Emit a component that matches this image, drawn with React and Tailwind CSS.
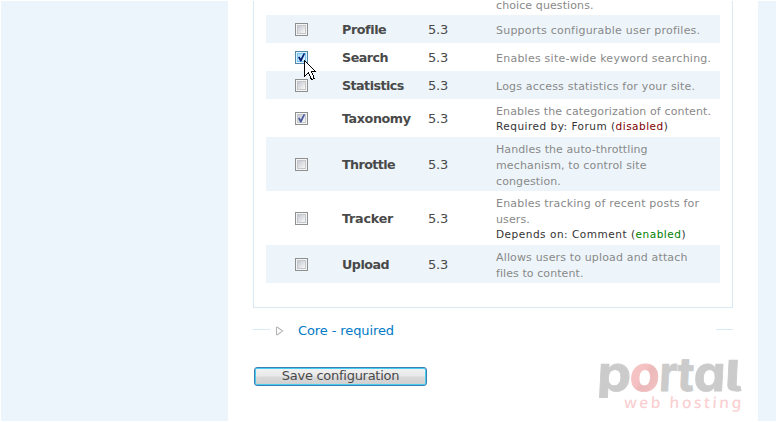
import React from "react";

const modules = [
  { name: "Profile", nt: "tracking-[-0.4px]", h: "h-[28px]", lines: [["Supports configurable user profiles.", "tracking-[0.22px]"]] },
  { name: "Search", nt: "tracking-[-0.5px]", h: "h-[28px]", state: "hover", lines: [["Enables site-wide keyword searching.", "tracking-[0.24px]"]] },
  { name: "Statistics", nt: "tracking-[-0.55px]", h: "h-[28px]", lines: [["Logs access statistics for your site.", "tracking-[0.19px]"]] },
  {
    name: "Taxonomy", nt: "tracking-[-0.4px]", h: "h-[38px]", state: "checked",
    lines: [["Enables the categorization of content.", "tracking-[0.13px]"]],
    note: ["Required by: Forum (", "disabled", "text-[#800000]", "tracking-[0.49px]"],
  },
  {
    name: "Throttle", nt: "tracking-[-0.6px]", h: "h-[54px]",
    lines: [
      ["Handles the auto-throttling", "tracking-[0.08px]"],
      ["mechanism, to control site", "tracking-[0.15px]"],
      ["congestion.", "tracking-[0.1px]"],
    ],
  },
  {
    name: "Tracker", nt: "tracking-[-0.2px]", h: "h-[54px]",
    lines: [["Enables tracking of recent posts for", "tracking-[0.2px]"], ["users.", "tracking-[0.1px]"]],
    note: ["Depends on: Comment (", "enabled", "text-[#008000]", "tracking-[0.52px]"],
  },
  {
    name: "Upload", nt: "tracking-[-0.5px]", h: "h-[38px]",
    lines: [["Allows users to upload and attach", "tracking-[0.15px]"], ["files to content.", "tracking-[0.08px]"]],
  },
];

function Checkbox({ state }) {
  const hover = state === "hover";
  return (
    <svg width="13" height="13" viewBox="0 0 13 13" className="block">
      <defs>
        <linearGradient id={hover ? "cbh" : "cbn"} x1="0" y1="0" x2="1" y2="1">
          <stop offset="0.1" stopColor={hover ? "#a9dcf8" : "#c6cad2"} />
          <stop offset="0.9" stopColor={hover ? "#e8f7ff" : "#f6f6f6"} />
        </linearGradient>
      </defs>
      <rect x="0.5" y="0.5" width="12" height="12" fill={hover ? "#def3fd" : "#f4f4f4"} stroke={hover ? "#5586a3" : "#8e8f8f"} />
      <rect x="2.5" y="2.5" width="8" height="8" fill={hover ? "url(#cbh)" : "url(#cbn)"} stroke={hover ? "#79c6f9" : "#c4c7cc"} />
      {state && (
        <path d="M3 6.2 L4.4 5.4 L5.8 7.6 L8.6 2.3 L10.2 2.6 L6.4 10.4 L5.2 10.4 Z" fill={hover ? "#061f72" : "#4a5a9c"} />
      )}
    </svg>
  );
}

function Cursor() {
  return (
    <svg width="13" height="21" viewBox="0 0 13 21" className="absolute left-[304px] top-[60px]" shapeRendering="crispEdges">
      <path d="M0.5 0.5 V16.5 L4.5 12.5 L7 18.5 L8 19.5 L10 18.5 L9.5 16.5 L7.5 11.5 H11.5 Z" fill="#fff" stroke="#000" />
    </svg>
  );
}

function Row({ m, odd }) {
  return (
    <div className={`flex items-center ${m.h} ${odd ? "bg-[#edf5fa]" : "bg-white"}`}>
      <div className="w-[76px] shrink-0 pl-[29px] pt-px">
        <Checkbox state={m.state} />
      </div>
      <div className={`w-[86px] shrink-0 pt-px text-[12.7px] font-bold leading-[20px] ${m.nt}`}>{m.name}</div>
      <div className="w-[68px] shrink-0 pt-px text-[13px] tracking-[-0.2px]">5.3</div>
      <div className={`whitespace-nowrap text-[11px] leading-[16px] text-[#898989] ${m.note ? "pt-[2px]" : "pt-[3px]"}`}>
        {m.lines.map(([t, tracking]) => (
          <div key={t} className={tracking}>{t}</div>
        ))}
        {m.note && (
          <div className={`h-[15px] text-[10.5px] leading-[12px] text-[#333] ${m.note[3]}`}>
            {m.note[0]}
            <span className={m.note[2]}>{m.note[1]}</span>)
          </div>
        )}
      </div>
    </div>
  );
}

const letters = [
  { c: "p", x: -0.5, sx: 1.1, sy: 1 },
  { c: "o", x: 32, sx: 1.0, sy: 1 },
  { c: "r", x: 61.5, sx: 0.9, sy: 1 },
  { c: "t", x: 79.5, sx: 0.95, sy: 0.95 },
  { c: "a", x: 96, sx: 1.03, sy: 1 },
  { c: "l", x: 127, sx: 1.15, sy: 0.87 },
];

function Logo() {
  return (
    <svg width="150" height="58" viewBox="0 0 150 58" className="absolute left-[597px] top-[357px] overflow-visible">
      <defs>
        <clipPath id="mark">
          <rect x="-5" y="-10" width="160" height="51" />
        </clipPath>
        <linearGradient id="ring" x1="0" y1="0" x2="1" y2="1">
          <stop offset="0" stopColor="#f8caca" />
          <stop offset="0.45" stopColor="#f5c0c1" />
          <stop offset="0.55" stopColor="#ecb9ba" />
          <stop offset="1" stopColor="#f6c4c6" />
        </linearGradient>
      </defs>
      <g clipPath="url(#mark)" className="font-['Inter',sans-serif] text-[49px] font-bold [font-feature-settings:'cv05','cv11','ss02']" strokeLinejoin="round">
        {letters.map((l) => {
          const paint = l.c === "o" ? "url(#ring)" : "#cbcbcb";
          return (
            <text key={l.c} transform={`translate(${l.x} 34) skewX(-3) scale(${l.sx} ${l.sy})`} fill={paint} stroke={paint} strokeWidth="0.8">
              {l.c}
            </text>
          );
        })}
      </g>
      <text transform="translate(27 51) skewX(-3)" className="font-['Noto_Sans',sans-serif] text-[15.5px] font-medium" textLength="117" fill="#f9cfd1">
        web hosting
      </text>
    </svg>
  );
}

export default function App() {
  return (
    <div className="relative h-[422px] w-[776px] overflow-hidden bg-white py-px pl-px font-['DejaVu_Sans',sans-serif] text-[#494949]">
      <div className="flex h-[420px] bg-[#edf5fc]">
        <div className="w-[227px] shrink-0" />
        <main className="h-[420px] w-[530px] shrink-0 bg-white pl-[25px]">
          <section className="h-[307px] w-[480px] border-x border-b border-[#d9eaf5] pl-[12px]">
            <div className="w-[454px]">
              <div className="h-[14px] pl-[230px] text-[11px] leading-[11px] tracking-[0.1px] text-[#898989]">
                <div className="relative -top-px">choice questions.</div>
              </div>
              {modules.map((m, i) => (
                <Row key={m.name} m={m} odd={i % 2 === 0} />
              ))}
            </div>
          </section>
          <div className="mt-[13px] flex h-[20px] w-[480px] items-center">
            <span className="-mt-[3px] h-px w-[17px] bg-[#d9eaf5]" />
            <svg width="9" height="10" viewBox="0 0 9 10" className="-mt-px ml-[5px]">
              <path d="M1.5 1.2 V8.8 H2.6 L7.6 5 L2.6 1.2 Z" fill="#fff" stroke="#b5b5b5" strokeWidth="1.1" />
            </svg>
            <a className="ml-[14px] text-[13px] leading-[20px] tracking-[-0.1px] text-[#027ac6]">Core - required</a>
            <span className="-mt-[3px] ml-auto h-px w-[17px] bg-[#d9eaf5]" />
          </div>
          <button className="ml-px mt-[26px] flex h-[19px] w-[173px] items-center justify-center rounded-[3px] border border-[#3c7fb1] bg-[linear-gradient(#f2f2f2_0%,#e8e8e8_48%,#dadada_52%,#cfcfcf_100%)] pb-[2px] text-[13px] leading-[15px] tracking-[-0.27px] shadow-[inset_0_0_0_1px_#48cdf2]">
            Save configuration
          </button>
        </main>
      </div>
      <Cursor />
      <Logo />
    </div>
  );
}
